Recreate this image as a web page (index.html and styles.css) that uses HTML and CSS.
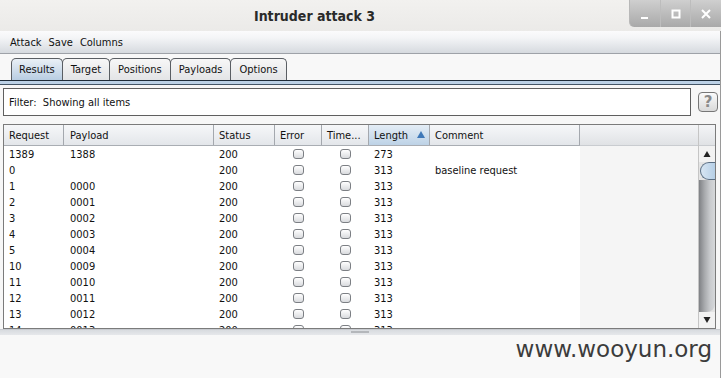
FILE: index.html
```html
<!DOCTYPE html>
<html>
<head>
<meta charset="utf-8">
<link rel="stylesheet" href="styles.css">
</head>
<body>
<div class="window">
  <div class="titlebar">
    <span class="title">Intruder attack 3</span>
    <div class="wm">
      <div class="wm-btn"><svg width="12" height="12" viewBox="0 0 12 12"><rect x="2" y="9" width="7" height="2" fill="#fff"/></svg></div>
      <div class="wm-btn"><svg width="12" height="12" viewBox="0 0 12 12"><rect x="2.5" y="2.5" width="7" height="7" fill="none" stroke="#fff" stroke-width="2"/></svg></div>
      <div class="wm-btn"><svg width="12" height="12" viewBox="0 0 12 12"><path d="M2 2 L10 10 M10 2 L2 10" stroke="#fff" stroke-width="2"/></svg></div>
    </div>
  </div>
  <div class="body">
    <div class="menubar">
      <span>Attack</span><span>Save</span><span>Columns</span>
    </div>
    <div class="tabs">
      <div class="tab active">Results</div>
      <div class="tab">Target</div>
      <div class="tab">Positions</div>
      <div class="tab">Payloads</div>
      <div class="tab">Options</div>
    </div>
    <div class="tabband"></div>
    <div class="filter-row">
      <div class="filter">Filter:&nbsp; Showing all items</div>
      <div class="help">?</div>
    </div>
    <div class="table">
      <div class="grid">
        <div class="hdr">
          <div class="c c1">Request</div>
          <div class="c c2">Payload</div>
          <div class="c c3">Status</div>
          <div class="c c4">Error</div>
          <div class="c c5">Time...</div>
          <div class="c c6 sorted">Length <span class="arrow"></span></div>
          <div class="c c7">Comment</div>
        </div>
        <div class="rows">
          <div class="row"><div class="c c1">1389</div><div class="c c2">1388</div><div class="c c3">200</div><div class="c c4"><i class="cb"></i></div><div class="c c5"><i class="cb"></i></div><div class="c c6">273</div><div class="c c7"></div></div>
          <div class="row"><div class="c c1">0</div><div class="c c2"></div><div class="c c3">200</div><div class="c c4"><i class="cb"></i></div><div class="c c5"><i class="cb"></i></div><div class="c c6">313</div><div class="c c7">baseline request</div></div>
          <div class="row"><div class="c c1">1</div><div class="c c2">0000</div><div class="c c3">200</div><div class="c c4"><i class="cb"></i></div><div class="c c5"><i class="cb"></i></div><div class="c c6">313</div><div class="c c7"></div></div>
          <div class="row"><div class="c c1">2</div><div class="c c2">0001</div><div class="c c3">200</div><div class="c c4"><i class="cb"></i></div><div class="c c5"><i class="cb"></i></div><div class="c c6">313</div><div class="c c7"></div></div>
          <div class="row"><div class="c c1">3</div><div class="c c2">0002</div><div class="c c3">200</div><div class="c c4"><i class="cb"></i></div><div class="c c5"><i class="cb"></i></div><div class="c c6">313</div><div class="c c7"></div></div>
          <div class="row"><div class="c c1">4</div><div class="c c2">0003</div><div class="c c3">200</div><div class="c c4"><i class="cb"></i></div><div class="c c5"><i class="cb"></i></div><div class="c c6">313</div><div class="c c7"></div></div>
          <div class="row"><div class="c c1">5</div><div class="c c2">0004</div><div class="c c3">200</div><div class="c c4"><i class="cb"></i></div><div class="c c5"><i class="cb"></i></div><div class="c c6">313</div><div class="c c7"></div></div>
          <div class="row"><div class="c c1">10</div><div class="c c2">0009</div><div class="c c3">200</div><div class="c c4"><i class="cb"></i></div><div class="c c5"><i class="cb"></i></div><div class="c c6">313</div><div class="c c7"></div></div>
          <div class="row"><div class="c c1">11</div><div class="c c2">0010</div><div class="c c3">200</div><div class="c c4"><i class="cb"></i></div><div class="c c5"><i class="cb"></i></div><div class="c c6">313</div><div class="c c7"></div></div>
          <div class="row"><div class="c c1">12</div><div class="c c2">0011</div><div class="c c3">200</div><div class="c c4"><i class="cb"></i></div><div class="c c5"><i class="cb"></i></div><div class="c c6">313</div><div class="c c7"></div></div>
          <div class="row"><div class="c c1">13</div><div class="c c2">0012</div><div class="c c3">200</div><div class="c c4"><i class="cb"></i></div><div class="c c5"><i class="cb"></i></div><div class="c c6">313</div><div class="c c7"></div></div>
          <div class="row"><div class="c c1">14</div><div class="c c2">0013</div><div class="c c3">200</div><div class="c c4"><i class="cb"></i></div><div class="c c5"><i class="cb"></i></div><div class="c c6">313</div><div class="c c7"></div></div>
        </div>
      </div>
      <div class="filler">
        <div class="filler-hdr"></div>
      </div>
      <div class="vscroll">
        <div class="sb-corner"></div>
        <div class="sb-btn"><svg width="8" height="8" viewBox="0 0 8 8"><path d="M4 1 L7.5 7 L0.5 7 Z" fill="#222"/></svg></div>
        <div class="sb-track">
          <div class="sb-cap"></div>
          <div class="sb-thumb"></div>
        </div>
        <div class="sb-btn"><svg width="8" height="8" viewBox="0 0 8 8"><path d="M0.5 1 L7.5 1 L4 7 Z" fill="#222"/></svg></div>
      </div>
    </div>
    <div class="splitter"><div class="grip"></div></div>
    <div class="bottom">
      <span class="watermark">www.wooyun.org</span>
    </div>
  </div>
</div>
</body>
</html>
```

FILE: styles.css
```css
* { box-sizing: border-box; }
html, body { margin: 0; padding: 0; }
body {
  width: 721px;
  height: 378px;
  overflow: hidden;
  background: #f7f7f7;
  font-family: "DejaVu Sans Condensed", "DejaVu Sans", sans-serif;
  font-size: 11px;
  color: #111;
}
.window { width: 721px; height: 378px; display: flex; flex-direction: column; }
.titlebar {
  position: relative;
  height: 31px;
  flex: none;
  background: linear-gradient(#f2f1ef, #ebeae8);
  display: flex;
  align-items: center;
  justify-content: center;
  padding-right: 92px;
}
.title {
  font-family: "DejaVu Sans Condensed", "DejaVu Sans", sans-serif;
  font-weight: bold;
  font-size: 14px;
  color: #2a2a2a;
}
.wm {
  position: absolute;
  top: 0;
  right: 0;
  width: 92px;
  height: 27px;
  display: flex;
  background: linear-gradient(#cfcfcf, #a9a9a9);
  border-bottom-left-radius: 5px;
  border-left: 1px solid #b8b8b8;
}
.wm-btn {
  flex: 1;
  display: flex;
  align-items: center;
  justify-content: center;
  border-left: 1px solid #bdbdbd;
}
.wm-btn:first-child { border-left: none; }
.body {
  flex: 1;
  display: flex;
  flex-direction: column;
  border-right: 1px solid #9a9a9a;
  min-height: 0;
}
.menubar {
  height: 23px;
  flex: none;
  background: linear-gradient(#fbfbfc, #f4f5f7 30%, #d6dadf);
  border-bottom: 1px solid #9ea2a8;
  display: flex;
  align-items: center;
  gap: 7px;
  padding-left: 10px;
}
.tabs {
  height: 26px;
  flex: none;
  display: flex;
  align-items: flex-end;
  padding-left: 11px;
  background: #f8f8f8;
}
.tab {
  height: 22px;
  padding: 0 8px;
  margin-right: -1px;
  display: flex;
  align-items: center;
  border: 1px solid #5a5e63;
  border-bottom: none;
  border-radius: 5px 5px 0 0;
  background: linear-gradient(#f7f7f7, #e3e4e6);
  color: #111;
}
.tab.active {
  background: linear-gradient(#eaf0f6, #b8cde2);
  padding: 0 7px;
}
.tabband {
  height: 5px;
  flex: none;
  background: #bcd1e6;
  border-top: 1px solid #1e2b38;
  border-bottom: 1px solid #445566;
}
.filter-row {
  flex: none;
  display: flex;
  align-items: center;
  padding: 3px 0 0 3px;
  gap: 7px;
}
.filter {
  width: 688px;
  height: 28px;
  background: #fff;
  border: 1px solid #5f5f5f;
  display: flex;
  align-items: center;
  padding-left: 5px;
}
.help {
  width: 20px;
  height: 20px;
  border: 1px solid #777;
  border-radius: 4px;
  background: linear-gradient(#fbfbfb, #d9d9d9);
  color: #8a8a8a;
  font-family: "DejaVu Sans", sans-serif;
  font-size: 15px;
  font-weight: bold;
  display: flex;
  align-items: center;
  justify-content: center;
}
.table {
  margin: 8px 0 0 3px;
  width: 713px;
  height: 205px;
  flex: none;
  border: 1px solid #7b7b7b;
  display: flex;
  overflow: hidden;
  background: #f5f5f5;
}
.grid { width: 576px; flex: none; background: #fff; }
.hdr {
  height: 21px;
  display: flex;
  background: linear-gradient(#f6f7f9, #e3e6ea);
  border-bottom: 1px solid #a9adb3;
}
.hdr .c {
  border-right: 1px solid #a4a8ae;
  display: flex;
  align-items: center;
}
.hdr .sorted { background: linear-gradient(#e4edf6, #bdd2e6); }
.arrow {
  display: inline-block;
  width: 0; height: 0;
  border-left: 4px solid transparent;
  border-right: 4px solid transparent;
  border-bottom: 7px solid #3f78b8;
  margin-left: 9px;
  margin-top: -1px;
}
.row { height: 16px; display: flex; align-items: center; }
.c { padding-left: 5px; white-space: nowrap; height: 100%; display: flex; align-items: center; }
.c1 { width: 60px; }
.c2 { width: 150px; padding-left: 6px; }
.c3 { width: 61px; }
.c4 { width: 47px; justify-content: center; padding-left: 0; }
.c5 { width: 47px; justify-content: center; padding-left: 0; }
.hdr .c4, .hdr .c5 { justify-content: flex-start; padding-left: 5px; }
.c6 { width: 61px; }
.c7 { width: 150px; }
.cb {
  display: block;
  width: 11px;
  height: 10px;
  border: 1px solid #7c7f84;
  border-radius: 3px;
  background: linear-gradient(#ffffff, #d9dbde);
}
.filler { flex: 1; }
.filler-hdr {
  height: 21px;
  background: linear-gradient(#f4f5f7, #e0e2e5);
  border-bottom: 1px solid #c9ccd0;
}
.vscroll {
  width: 17px;
  flex: none;
  display: flex;
  flex-direction: column;
  background: #f3f3f3;
  border-left: 1px solid #c5c5c5;
}
.sb-corner {
  height: 21px;
  background: linear-gradient(#f4f5f7, #e0e2e5);
  border-bottom: 1px solid #c9ccd0;
}
.sb-btn {
  height: 16px;
  flex: none;
  display: flex;
  align-items: center;
  justify-content: center;
  background: #f2f2f2;
}
.sb-track {
  flex: 1;
  display: flex;
  flex-direction: column;
  background: #e4e4e4;
}
.sb-cap {
  height: 18px;
  flex: none;
  border: 1px solid #5b6f84;
  border-right: none;
  border-radius: 16px 0 0 16px;
  background: linear-gradient(to right, #d8e6f3, #b6cfe6);
  margin-left: 1px;
}
.sb-thumb {
  flex: 1;
  background: linear-gradient(to right, #7f8185, #a8aaad 35%, #c9cbce 70%, #d6d8da);
  border-bottom-right-radius: 8px;
}
.splitter {
  height: 6px;
  flex: none;
  background: linear-gradient(#d8dbdf, #e6e8eb);
  border-top: 1px solid #c8cbd0;
  display: flex;
  justify-content: center;
}
.grip { width: 18px; height: 2px; background: #b4b7bb; margin-top: 1px; }
.bottom {
  flex: 1;
  background: #f8f8f8;
  display: flex;
  justify-content: flex-end;
  padding-right: 8px;
  padding-top: 1px;
}
.watermark {
  font-family: "DejaVu Sans", sans-serif;
  font-size: 23px;
  color: #3c3c3c;
}
```
